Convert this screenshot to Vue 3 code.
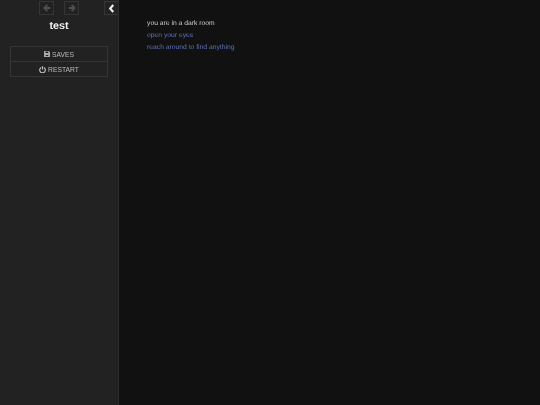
<template>
  <div class="page">
    <aside class="sidebar">
      <button type="button" class="stow" aria-label="Stow">
        <svg viewBox="0 0 8 10" width="7" height="9">
          <path d="M6 1 2.5 5 6 9" fill="none" stroke="#eee" stroke-width="2.4" />
        </svg>
      </button>
      <div class="history">
        <button type="button" class="history__btn" aria-label="Back">
          <svg viewBox="0 0 10 10" width="8" height="8">
            <path d="M5.5 1 1.5 5 5.5 9M2 5h7" fill="none" stroke="#505050" stroke-width="2.2" />
          </svg>
        </button>
        <button type="button" class="history__btn" aria-label="Forward">
          <svg viewBox="0 0 10 10" width="8" height="8">
            <path d="M4.5 1 8.5 5 4.5 9M8 5H1" fill="none" stroke="#505050" stroke-width="2.2" />
          </svg>
        </button>
      </div>
      <h1 class="title">{{ title }}</h1>
      <nav class="menu">
        <button type="button" class="menu__item">
          <svg viewBox="0 0 10 10" width="6" height="6">
            <path d="M0 0h8l2 2v8H0zM2.5 1v2.5h4.5V1zM3 6.5v2h4v-2z" fill="#aaa" fill-rule="evenodd" />
          </svg>
          SAVES
        </button>
        <button type="button" class="menu__item">
          <svg viewBox="0 0 10 10" width="7" height="7">
            <path d="M3 2.2a4 4 0 1 0 4 0M5 .5v4.5" fill="none" stroke="#bbb" stroke-width="1.7" />
          </svg>
          RESTART
        </button>
      </nav>
    </aside>
    <main class="passage">
      <p class="passage__line">you are in a dark room</p>
      <a v-for="link in links" :key="link" class="passage__link">{{ link }}</a>
    </main>
  </div>
</template>

<script setup>
const title = 'test'
const links = ['open your eyes', 'reach around to find anything']
</script>

<style>
html,
body {
  margin: 0;
  background: #111;
}
</style>

<style scoped>
.page {
  display: flex;
  height: 405px;
  width: 540px;
  overflow: hidden;
  font-family: "Liberation Sans", Arial, sans-serif;
  text-rendering: geometricPrecision;
  background: #111;
}

.sidebar {
  position: relative;
  box-sizing: border-box;
  width: 119px;
  flex: none;
  background: #222;
  border-right: 1px solid #2c2c2c;
  padding: 0 10px;
}

.stow {
  position: absolute;
  top: 1px;
  right: 0;
  box-sizing: border-box;
  width: 14px;
  height: 14px;
  padding: 0;
  display: flex;
  align-items: center;
  justify-content: center;
  background: #222;
  border: 1px solid #353535;
  border-right: 0;
}

.history {
  display: flex;
  justify-content: center;
  gap: 10px;
  padding-top: 1px;
}

.history__btn {
  box-sizing: border-box;
  width: 15px;
  height: 14px;
  padding: 0;
  display: flex;
  align-items: center;
  justify-content: center;
  background: transparent;
  border: 1px solid #353535;
}

.title {
  margin: 4px 0 13px;
  color: #eee;
  font-size: 10.8px;
  line-height: 14px;
  font-weight: 700;
  text-align: center;
  will-change: transform;
}

.menu {
  display: flex;
  flex-direction: column;
  width: 98px;
  border: 1px solid #353535;
  box-sizing: border-box;
}

.menu__item {
  display: flex;
  align-items: center;
  justify-content: center;
  gap: 2px;
  height: 14px;
  padding: 0;
  font: inherit;
  font-size: 6.75px;
  color: #bbb;
  background: transparent;
  border: 0;
  will-change: transform;
}

.menu__item + .menu__item {
  height: 15px;
  border-top: 1px solid #353535;
}

.passage {
  padding: 17px 28px;
  font-size: 6.75px;
  line-height: 12px;
  will-change: transform;
}

.passage__line {
  margin: 1px 0 0;
  color: #ccc;
}

.passage__link {
  display: block;
  color: #5f72b5;
}
</style>
